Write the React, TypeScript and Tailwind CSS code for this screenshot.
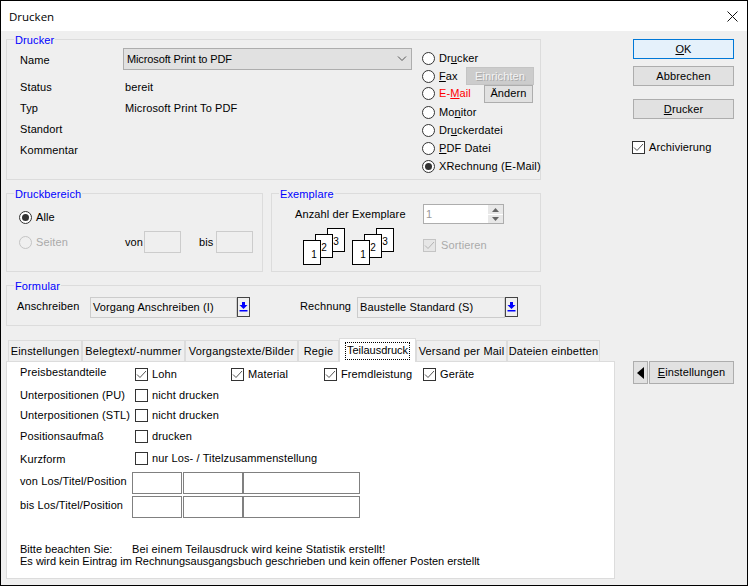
import type { ReactNode } from "react";

function Group({ title, className, children }: { title: string; className: string; children: ReactNode }) {
  return (
    <div className={`relative border border-[#dcdcdc] ${className}`}>
      <span className="absolute left-[7px] top-[-6px] bg-[#efefef] px-px leading-[13px] text-[#0000ff]">{title}</span>
      {children}
    </div>
  );
}

function Radio({ checked, disabled }: { checked?: boolean; disabled?: boolean }) {
  return (
    <span className={`flex h-[13px] w-[13px] shrink-0 items-center justify-center rounded-full border ${disabled ? "border-[#c4c4c4] bg-[#efefef]" : "border-[#333] bg-white"}`}>
      {checked && <span className="h-[7px] w-[7px] rounded-full bg-[#333]" />}
    </span>
  );
}

function Check({ checked, disabled }: { checked?: boolean; disabled?: boolean }) {
  return (
    <span className={`flex h-[13px] w-[13px] shrink-0 items-center justify-center border ${disabled ? "border-[#c4c4c4] bg-[#e6e6e6]" : "border-[#333] bg-white"}`}>
      {checked && (
        <svg width="11" height="11" viewBox="0 0 11 11" fill="none">
          <path d="M1 5.5 L4 8.5 L10 2" stroke={disabled ? "#b4b4b4" : "#555"} strokeWidth="1" />
        </svg>
      )}
    </span>
  );
}

function Btn({ className, children }: { className: string; children: ReactNode }) {
  return (
    <div className={`flex items-center justify-center border border-[#adadad] bg-[#e1e1e1] ${className}`}>{children}</div>
  );
}

function RadioRow({ h, checked, children }: { h: string; checked?: boolean; children: ReactNode }) {
  return (
    <div className={`flex items-center ${h}`}>
      <Radio checked={checked} />
      <span className="ml-[4px] whitespace-nowrap">{children}</span>
    </div>
  );
}

function PickerField({ label, value, labelWidth, fieldWidth }: { label: string; value: string; labelWidth: string; fieldWidth: string }) {
  return (
    <div className="flex items-start">
      <span className={`pt-[3px] ${labelWidth}`}>{label}</span>
      <div className={`flex h-[21px] items-center border border-[#cccccc] pl-[2px] ${fieldWidth}`}>{value}</div>
      <div className="flex h-[20px] w-[13px] items-center justify-center border border-[#444]">
        <svg width="9" height="10" viewBox="0 0 9 10" fill="#0000ff">
          <path d="M3 0 H6 V3 H8.5 L4.5 7 L0.5 3 H3 Z" />
          <rect x="0.5" y="8" width="8" height="1.5" />
        </svg>
      </div>
    </div>
  );
}

function PagesIcon() {
  return (
    <svg width="43" height="37" viewBox="0 0 43 37" className="text-[10px]">
      <rect x="24.5" y="0.5" width="17" height="23" fill="#fff" stroke="#000" />
      <text x="33" y="17" fontSize="10" textAnchor="middle" fill="#000">3</text>
      <rect x="12.5" y="6.5" width="17" height="23" fill="#fff" stroke="#000" />
      <text x="21" y="23" fontSize="10" textAnchor="middle" fill="#000">2</text>
      <rect x="0.5" y="12.5" width="17" height="24" fill="#fff" stroke="#000" />
      <text x="11" y="30" fontSize="10" textAnchor="middle" fill="#000">1</text>
    </svg>
  );
}

function PanelRow({ label, className, children }: { label: string; className: string; children: ReactNode }) {
  return (
    <div className={`flex h-[20px] items-center ${className}`}>
      <span className="w-[115px] whitespace-nowrap">{label}</span>
      {children}
    </div>
  );
}

function CheckItem({ label, width }: { label: string; width?: string }) {
  return (
    <div className={`flex items-center ${width ?? ""}`}>
      <Check checked />
      <span className="ml-[4px]">{label}</span>
    </div>
  );
}

function RangeRow({ label, className }: { label: string; className: string }) {
  return (
    <div className={`flex h-[22px] items-center ${className}`}>
      <span className="w-[112px] whitespace-nowrap pb-[3px]">{label}</span>
      <div className="h-full w-[50px] border border-[#808080] bg-white" />
      <div className="ml-px h-full w-[60px] border border-[#808080] bg-white" />
      <div className="h-full w-[117px] border border-[#808080] bg-white" />
    </div>
  );
}

const TABS = [
  { label: "Einstellungen", w: "w-[74px]" },
  { label: "Belegtext/-nummer", w: "w-[103px]" },
  { label: "Vorgangstexte/Bilder", w: "w-[113px]" },
  { label: "Regie", w: "w-[41px]" },
];

export default function App() {
  return (
    <div className="flex h-[586px] w-[748px] flex-col overflow-hidden border border-black bg-[#efefef] font-['Liberation_Sans',sans-serif] text-[11px] leading-[13px] tracking-[0.12px] text-black">
      {/* Title bar */}
      <div className="flex h-[30px] shrink-0 items-center justify-between bg-white pl-[8px] pr-[9px]">
        <span className="font-['Open_Sans',sans-serif] text-[11.5px] tracking-normal">Drucken</span>
        <svg width="11" height="11" viewBox="0 0 11 11" stroke="#111" strokeWidth="1">
          <path d="M0.5 0.5 L10.5 10.5 M10.5 0.5 L0.5 10.5" />
        </svg>
      </div>

      <div className="flex flex-1 pl-[5px] pt-[8px]">
        {/* Left column */}
        <div className="w-[609px]">
          <Group title="Drucker" className="flex h-[141px] w-[535px]">
            <div className="w-[415px] pl-[13px] pt-[8px]">
              <div className="flex items-start">
                <span className="w-[103px] pt-[6px]">Name</span>
                <div className="flex h-[22px] w-[289px] items-center justify-between border border-[#adadad] bg-[#e1e1e1] pl-[3px] pr-[4px] tracking-[-0.12px]">
                  Microsoft Print to PDF
                  <svg width="10" height="6" viewBox="0 0 10 6" fill="none" stroke="#555">
                    <path d="M1 0.5 L5 4.5 L9 0.5" />
                  </svg>
                </div>
              </div>
              <div className="mt-[7px] grid grid-cols-[105px_1fr] auto-rows-[21px] items-center">
                <span>Status</span>
                <span>bereit</span>
                <span>Typ</span>
                <span>Microsoft Print To PDF</span>
                <span>Standort</span>
                <span />
                <span>Kommentar</span>
                <span />
              </div>
            </div>
            <div className="w-[112px] pt-[9px]">
              <RadioRow h="h-[18px]">
                Dr<u>u</u>cker
              </RadioRow>
              <div className="flex h-[18px] items-center justify-between">
                <RadioRow h="h-[18px]">
                  <u>F</u>ax
                </RadioRow>
                <div className="flex h-[18px] w-[68px] items-center justify-center border border-[#c4c4c4] bg-[#cccccc] text-[#f4f4f4] [text-shadow:1px_1px_0_#a8a8a8]">
                  Einrichten
                </div>
              </div>
              <div className="flex h-[17px] items-center justify-between">
                <RadioRow h="h-[17px]">
                  <span className="text-[#ff0000]">
                    E-<u>M</u>ail
                  </span>
                </RadioRow>
                <Btn className="mr-px h-[18px] w-[49px]">Ändern</Btn>
              </div>
              <RadioRow h="mt-px h-[18px]">
                Mo<u>n</u>itor
              </RadioRow>
              <RadioRow h="h-[18px]">
                Dr<u>u</u>ckerdatei
              </RadioRow>
              <RadioRow h="h-[18px]">
                <u>P</u>DF Datei
              </RadioRow>
              <RadioRow h="h-[18px] tracking-[0.15px]" checked>
                XRechnung (E-Mail)
              </RadioRow>
            </div>
          </Group>

          <div className="mt-[13px] flex w-[535px] justify-between">
            <Group title="Druckbereich" className="h-[79px] w-[257px] pl-[12px] pt-[14px]">
              <div className="flex h-[18px] items-center">
                <Radio checked />
                <span className="ml-[4px]">Alle</span>
              </div>
              <div className="mt-[5px] flex h-[22px] items-center">
                <Radio disabled />
                <span className="ml-[4px] w-[89px] text-[#aaaaaa]">Seiten</span>
                <span className="w-[19px]">von</span>
                <div className="h-full w-[37px] border border-[#cccccc]" />
                <span className="ml-[18px] w-[17px]">bis</span>
                <div className="h-full w-[37px] border border-[#cccccc]" />
              </div>
            </Group>
            <Group title="Exemplare" className="flex h-[79px] w-[270px] pt-[10px]">
              <div className="w-[151px] pl-[23px]">
                <div className="pt-[4px] whitespace-nowrap">Anzahl der Exemplare</div>
                <div className="mt-[7px] flex gap-[6px] pl-[8px]">
                  <PagesIcon />
                  <PagesIcon />
                </div>
              </div>
              <div>
                <div className="flex h-[20px] w-[81px] items-center justify-between border border-[#adadad] bg-white pl-[2px] text-[#999]">
                  1
                  <div className="flex h-[18px] w-[15px] flex-col gap-px">
                    <div className="flex h-[9px] items-center justify-center bg-[#e8e8e8]">
                      <svg width="7" height="4" viewBox="0 0 7 4" fill="#666"><path d="M3.5 0 L7 4 H0 Z" /></svg>
                    </div>
                    <div className="flex h-[8px] items-center justify-center bg-[#e8e8e8]">
                      <svg width="7" height="4" viewBox="0 0 7 4" fill="#666"><path d="M0 0 H7 L3.5 4 Z" /></svg>
                    </div>
                  </div>
                </div>
                <div className="mt-[15px] flex items-center">
                  <Check checked disabled />
                  <span className="ml-[5px] text-[#aaaaaa]">Sortieren</span>
                </div>
              </div>
            </Group>
          </div>

          <Group title="Formular" className="mt-[13px] flex h-[41px] w-[535px] pl-[10px] pt-[11px]">
            <PickerField label="Anschreiben" value="Vorgang Anschreiben (I)" labelWidth="w-[73px]" fieldWidth="w-[147px]" />
            <div className="ml-[50px]">
              <PickerField label="Rechnung" value="Baustelle Standard (S)" labelWidth="w-[57px]" fieldWidth="w-[148px]" />
            </div>
          </Group>

          {/* Tabs */}
          <div className="mt-[12px] flex h-[23px] items-end pl-[2px] tracking-[0.2px]">
            {TABS.map((t) => (
              <div key={t.label} className={`flex h-[21px] items-center justify-center whitespace-nowrap border border-b-0 border-[#dcdcdc] ${t.w}`}>
                {t.label}
              </div>
            ))}
            <div className="z-10 mb-[-1px] flex h-[24px] w-[77px] items-center justify-center border border-b-0 border-[#dcdcdc] bg-white tracking-normal">
              <span className="border border-dotted border-black px-px pb-[2px] pt-px leading-[13px]">Teilausdruck</span>
            </div>
            <div className="flex h-[21px] w-[91px] items-center justify-center whitespace-nowrap border border-b-0 border-[#dcdcdc]">Versand per Mail</div>
            <div className="flex h-[21px] w-[93px] items-center justify-center whitespace-nowrap border border-b-0 border-[#dcdcdc]">Dateien einbetten</div>
          </div>

          <div className="h-[218px] border border-[#dcdcdc] bg-white pl-[13px] pt-[2px]">
            <PanelRow label="Preisbestandteile" className="[&>span:first-child]:mb-[4px]">
              <CheckItem label="Lohn" width="w-[96px]" />
              <CheckItem label="Material" width="w-[93px]" />
              <CheckItem label="Fremdleistung" width="w-[99px]" />
              <CheckItem label="Geräte" />
            </PanelRow>
            <PanelRow label="Unterpositionen (PU)" className="mt-px">
              <Check />
              <span className="ml-[4px]">nicht drucken</span>
            </PanelRow>
            <PanelRow label="Unterpositionen (STL)" className="">
              <Check />
              <span className="ml-[4px]">nicht drucken</span>
            </PanelRow>
            <PanelRow label="Positionsaufmaß" className="mt-px">
              <Check />
              <span className="ml-[4px]">drucken</span>
            </PanelRow>
            <PanelRow label="Kurzform" className="mt-[2px] [&>span:first-child]:pt-[2px]">
              <Check />
              <span className="ml-[4px]">nur Los- / Titelzusammenstellung</span>
            </PanelRow>
            <RangeRow label="von Los/Titel/Position" className="mt-[4px]" />
            <RangeRow label="bis Los/Titel/Position" className="mt-[2px]" />
            <div className="mt-[25px] leading-[12px]">
              <div className="flex">
                <span className="w-[112px] tracking-normal">Bitte beachten Sie:</span>
                <span className="tracking-[0.15px]">Bei einem Teilausdruck wird keine Statistik erstellt!</span>
              </div>
              <div className="tracking-normal">Es wird kein Eintrag im Rechnungsausgangsbuch geschrieben und kein offener Posten erstellt</div>
            </div>
          </div>
        </div>

        {/* Right column */}
        <div className="ml-[18px] w-[101px]">
          <div className="flex h-[20px] items-center justify-center border border-[#0078d7] bg-[#e5f1fb]">
            <span><u>O</u>K</span>
          </div>
          <Btn className="mt-[7px] h-[20px]">Abbrechen</Btn>
          <Btn className="mt-[13px] h-[20px]">
            <span><u>D</u>rucker</span>
          </Btn>
          <div className="ml-[-1px] mt-[22px] flex items-center">
            <Check checked />
            <span className="ml-[4px]">Archivierung</span>
          </div>
          <div className="mt-[207px] flex h-[23px]">
            <div className="flex w-[15px] items-center justify-center border border-[#adadad] bg-[#e1e1e1]">
              <svg width="7" height="12" viewBox="0 0 7 12" fill="#000"><path d="M7 0 V12 L0 6 Z" /></svg>
            </div>
            <Btn className="ml-px w-[85px]">
              <span><u>E</u>instellungen</span>
            </Btn>
          </div>
        </div>
      </div>
    </div>
  );
}
